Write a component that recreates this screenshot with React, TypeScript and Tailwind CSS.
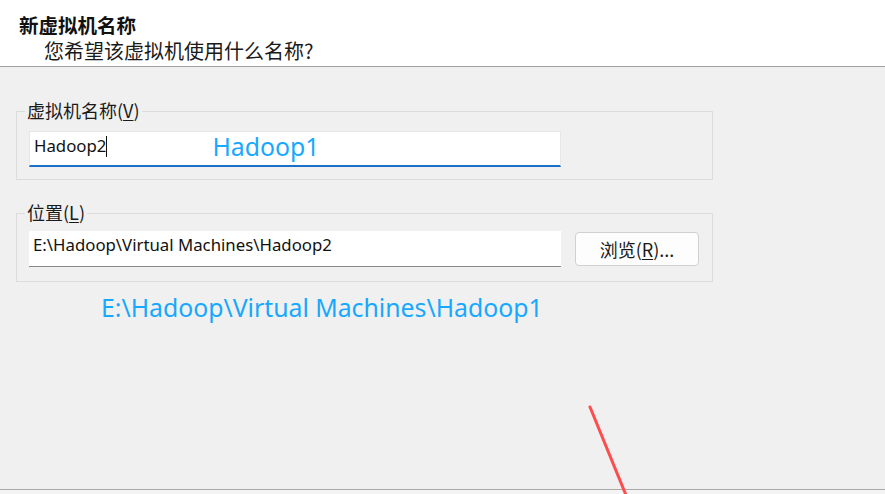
import React from "react";

const cjk = "font-['Microsoft_YaHei_UI','Noto_Sans_CJK_SC',sans-serif]";
const latin = "font-['Segoe_UI','Noto_Sans','Noto_Sans_CJK_SC',sans-serif]";

function GroupBox({ label, children }: { label: React.ReactNode; children: React.ReactNode }) {
  return (
    <div className="relative ml-4 w-[697px] h-[69px] border border-[#dcdcdc] pl-3 pt-[19px]">
      <span className={`absolute left-[8px] -top-[13px] bg-[#f0f0f0] px-[2px] text-[18px] leading-[22px] text-[#1a1a1a] ${cjk}`}>
        {label}
      </span>
      {children}
    </div>
  );
}

export default function App() {
  return (
    <div className={`relative w-[885px] h-[494px] overflow-hidden bg-[#f0f0f0] ${cjk}`}>
      {/* header */}
      <div className="h-[67px] bg-white border-b border-[#a0a0a0] pl-[19px] pt-[12px]">
        <div className="text-[19.5px] leading-[25px] font-bold text-[#111]">新虚拟机名称</div>
        <div className="pl-[25px] mt-[1px] text-[20px] leading-[25px] text-[#1a1a1a]">您希望该虚拟机使用什么名称?</div>
      </div>

      <div className="pt-[44px]">
        <GroupBox
          label={
            <>
              虚拟机名称(<span className="underline underline-offset-2">V</span>)
            </>
          }
        >
          <div className="flex items-center w-[532px] h-[36px] bg-white border border-[#e6e6e6] border-b-2 border-b-[#1a6fc9] pl-[4px] pb-[5px]">
            <span className={`text-[16.8px] leading-[22px] text-[#111] ${latin}`}>Hadoop2</span>
            <span className="w-px h-[21px] bg-[#111]" />
            <span className={`ml-[105px] text-[24.8px] leading-[30px] text-[#17a8ff] ${latin}`}>Hadoop1</span>
          </div>
        </GroupBox>

        <div className="h-[33px]" />

        <GroupBox
          label={
            <>
              位置(<span className="underline underline-offset-2">L</span>)
            </>
          }
        >
          <div className="flex items-center">
            <div className="flex items-center w-[532px] h-[36px] bg-white border-b border-[#8a8a8a] pl-[4px] pb-[8px] -mt-[2px]">
              <span className={`text-[16.8px] leading-[22px] text-[#111] ${latin}`}>E:\Hadoop\Virtual Machines\Hadoop2</span>
            </div>
            <button className="ml-[14px] -mt-[2px] w-[124px] h-[34px] rounded-[4px] border border-[#d0d0d0] bg-[#fdfdfd] text-[18px] leading-[22px] text-[#1a1a1a]">
              浏览(<span className="underline underline-offset-2">R</span>)...
            </button>
          </div>
        </GroupBox>

        <div className={`ml-[101px] mt-[10px] text-[24.8px] leading-[30px] text-[#17a8ff] ${latin}`}>
          E:\Hadoop\Virtual Machines\Hadoop1
        </div>
      </div>

      {/* footer separator */}
      <div className="absolute left-0 right-0 top-[489px] h-[5px] border-t border-[#a8a8a8] bg-[#f4f4f4]" />

      {/* annotation arrow */}
      <svg className="absolute left-0 top-0 pointer-events-none" width="885" height="494">
        <line x1="590" y1="407" x2="628" y2="500" stroke="#ff4d4d" strokeWidth="3" strokeLinecap="round" />
      </svg>
    </div>
  );
}
